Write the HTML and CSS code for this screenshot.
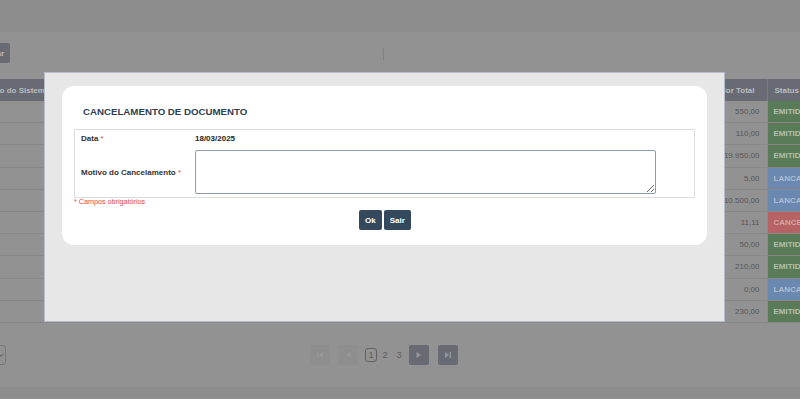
FILE: index.html
```html
<!doctype html>
<html>

<head>
	<meta charset="UTF-8">
	<meta name="viewport" content="width=device-width, initial-scale=1.0">
	<title>Documentos</title>
	<link rel="stylesheet" href="styles.css">
</head>

<body>

	<!-- topo -->
	<div class="topbar"></div>

	<!-- barra de filtros -->
	<div class="toolbar">
		<button class="btn-filtrar">Filtrar</button>
		<span class="sep"></span>
	</div>

	<!-- lista de documentos -->
	<table class="grid">
		<colgroup>
			<col style="width:106px">
			<col style="width:54px">
			<col style="width:122px">
			<col style="width:319px">
			<col style="width:124px">
			<col style="width:85px">
			<col style="width:80px">
		</colgroup>
		<thead>
			<tr>
				<th>Integração do Sistema</th>
				<th></th>
				<th></th>
				<th></th>
				<th></th>
				<th class="r">Valor Total</th>
				<th>Status</th>
			</tr>
		</thead>
		<tbody id="rows"></tbody>
	</table>

	<div class="footer">
		<div class="select"><span class="chev"></span></div>
		<div class="pager">
			<a class="pg-btn off" href="#"><svg width="8" height="8" viewBox="0 0 8 8"><rect x="1" y="1" width="1.4" height="6" fill="currentColor"/><path d="M7 1 L3 4 L7 7 Z" fill="currentColor"/></svg></a>
			<a class="pg-btn off prev" href="#"><svg width="8" height="8" viewBox="0 0 8 8"><path d="M6.5 1 L2 4 L6.5 7 Z" fill="currentColor"/></svg></a>
			<a class="pg-num active" href="#">1</a>
			<a class="pg-num" href="#">2</a>
			<a class="pg-num last" href="#">3</a>
			<a class="pg-btn" href="#"><svg width="8" height="8" viewBox="0 0 8 8"><path d="M1.5 1 L6 4 L1.5 7 Z" fill="currentColor"/></svg></a>
			<a class="pg-btn" href="#"><svg width="8" height="8" viewBox="0 0 8 8"><path d="M1 1 L5 4 L1 7 Z" fill="currentColor"/><rect x="5.6" y="1" width="1.4" height="6" fill="currentColor"/></svg></a>
		</div>
	</div>

	<div class="bottombar"></div>

	<!-- modal de cancelamento -->
	<div class="backdrop"></div>
	<div class="modal">
		<div class="card">
			<h3 class="card-title">CANCELAMENTO DE DOCUMENTO</h3>
			<div class="form-box">
				<label class="lbl">Data <span class="req">*</span></label>
				<div class="val">18/03/2025</div>
				<label class="lbl">Motivo do Cancelamento <span class="req">*</span></label>
				<textarea class="txt"></textarea>
			</div>
			<p class="obrig">* Campos obrigatórios</p>
			<div class="actions">
				<button class="btn">Ok</button>
				<button class="btn">Sair</button>
			</div>
		</div>
	</div>

	<script>
		var data = [
			['550,00', 'EMITIDO'],
			['110,00', 'EMITIDO'],
			['19.950,00', 'EMITIDO'],
			['5,00', 'LANCADO'],
			['10.500,00', 'LANCADO'],
			['11,11', 'CANCELADO'],
			['50,00', 'EMITIDO'],
			['210,00', 'EMITIDO'],
			['0,00', 'LANCADO'],
			['230,00', 'EMITIDO']
		];

		var tbody = document.getElementById("rows");
		data.forEach(function (d) {
			var tr = document.createElement("tr");
			var st = d[1].toLowerCase();
			tr.innerHTML = '<td></td><td></td><td></td><td></td><td></td>' +
				'<td class="num">' + d[0] + '</td>' +
				'<td class="st ' + st + '">' + d[1] + '</td>';
			tbody.appendChild(tr);
		});
	</script>

</body>

</html>
```

FILE: styles.css
```css
body {
	margin: 0;
	padding: 0;
	width: 800px;
	height: 399px;
	overflow: hidden;
	position: relative;
	font-family: "Liberation Sans", Arial, sans-serif;
	background: #a3a3a3;
}

.topbar {
	height: 32px;
	background: #9c9c9c;
}

.toolbar {
	height: 47px;
	display: flex;
	align-items: flex-start;
}

.btn-filtrar {
	margin: 11px 0 0 -32px;
	height: 20px;
	width: 42px;
	border: 0;
	border-radius: 2px;
	background: #747881;
	color: #cfd2d6;
	font-family: inherit;
	font-size: 8px;
	font-weight: 700;
	text-align: right;
	padding: 0 6px 0 0;
}

.sep {
	margin: 16px 0 0 373px;
	width: 1px;
	height: 12px;
	background: #8e8e8e;
}

/* tabela */
.grid {
	width: 890px;
	margin-left: -43px;
	table-layout: fixed;
	border-collapse: collapse;
	font-size: 8px;
}

.grid th {
	height: 22px;
	padding: 0 7px;
	background: #747881;
	color: #cdd0d4;
	font-size: 8px;
	font-weight: 700;
	text-align: left;
	white-space: nowrap;
	overflow: hidden;
	border-right: 1px solid #858993;
}

.grid th.r {
	text-align: right;
	padding-right: 12px;
}

.grid td {
	height: 21.2px;
	padding: 0 7px;
	border-bottom: 1px solid #989898;
	border-right: 1px solid #9c9c9c;
	white-space: nowrap;
	overflow: hidden;
}

.grid td.num {
	text-align: right;
	color: #626262;
}

.grid td.st {
	color: #c8d6c4;
	font-size: 8px;
	font-weight: 700;
	padding-left: 6px;
}

.emitido {
	background: #658961;
}

.lancado {
	background: #7798c4;
	color: #c4d2e6 !important;
}

.cancelado {
	background: #cc6f6f;
	color: #e8b8b8 !important;
}

/* rodape */
.footer {
	height: 64px;
	display: flex;
	align-items: center;
}

.select {
	margin-left: -40px;
	width: 44px;
	height: 18px;
	border: 1px solid #858585;
	border-radius: 3px;
	position: relative;
}

.chev {
	position: absolute;
	right: 2px;
	top: 6px;
	width: 3px;
	height: 3px;
	border-right: 1px solid #777;
	border-bottom: 1px solid #777;
	transform: rotate(45deg);
}

.pager {
	margin-left: 304px;
	display: flex;
	align-items: center;
	font-size: 9px;
}

.pg-btn {
	width: 20px;
	height: 20px;
	border-radius: 2px;
	background: #747881;
	color: #a6a9ae;
	display: flex;
	align-items: center;
	justify-content: center;
	margin-right: 9px;
}

.pg-btn.off {
	background: #9f9f9f;
	color: #a9a9a9;
	margin-right: 8px;
}

.pg-btn.prev {
	margin-right: 7px;
}

.pg-btn:last-child {
	margin-right: 0;
}

.pg-num {
	color: #6a6a6a;
	text-decoration: none;
	width: 12px;
	height: 14px;
	line-height: 14px;
	text-align: center;
	margin-right: 2px;
	box-sizing: border-box;
}

.pg-num.active {
	border: 1px solid #6e6e6e;
	border-radius: 3px;
	line-height: 12px;
}

.pg-num.last {
	margin-right: 4px;
}

.bottombar {
	height: 11px;
	background: #9c9c9c;
}

/* modal */
.backdrop {
	position: absolute;
	left: 0;
	top: 0;
	right: 0;
	bottom: 0;
	background: rgba(0, 0, 0, 0.1);
}

.modal {
	position: absolute;
	left: 44px;
	top: 72px;
	width: 681px;
	height: 250px;
	box-sizing: border-box;
	background: #e7e7e7;
	border: 1px solid #b6bdca;
	padding: 13px 17px 0 17px;
}

.card {
	background: #fff;
	border-radius: 12px;
	padding: 20px 12px 15px 12px;
}

.card-title {
	margin: 0 0 11px 9px;
	font-size: 9.7px;
	line-height: 12px;
	font-weight: 700;
	color: #2e3e52;
}

.form-box {
	border: 1px solid #dcdcdc;
	display: grid;
	grid-template-columns: 114px 461px;
	grid-template-rows: 16px 44px;
	row-gap: 4px;
	align-items: center;
	padding: 0 0 3px 6px;
}

.lbl {
	font-size: 8px;
	font-weight: 700;
	color: #333;
}

.req {
	color: #e04848;
	font-weight: 400;
}

.val {
	font-size: 8px;
	font-weight: 700;
	color: #222;
}

.txt {
	width: 461px;
	height: 44px;
	box-sizing: border-box;
	margin: 0;
	border: 1px solid #8d9cb0;
	border-radius: 2px;
	resize: vertical;
}

.obrig {
	margin: 0;
	height: 8px;
	line-height: 8px;
	font-size: 7.2px;
	color: #e04848;
}

.actions {
	display: flex;
	justify-content: center;
	gap: 2px;
	margin-top: 4px;
	padding-left: 1px;
}

.btn {
	height: 20px;
	padding: 0 6px;
	border: 0;
	border-radius: 2px;
	background: #34495e;
	color: #fff;
	font-family: inherit;
	font-size: 8px;
	font-weight: 700;
}
```
